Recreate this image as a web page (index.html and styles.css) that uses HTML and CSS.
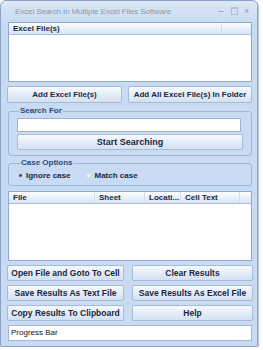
FILE: index.html
```html
<!DOCTYPE html>
<html>
<head>
<meta charset="utf-8">
<link rel="stylesheet" href="styles.css">
</head>
<body>
<div class="window">
  <div class="titlebar">
    <span class="title">Excel Search In Multiple Excel Files Software</span>
    <span class="controls">
      <span class="ctl min">&#8211;</span>
      <span class="ctl max"></span>
      <span class="ctl close">x</span>
    </span>
  </div>
  <div class="content">
    <div class="list files">
      <div class="header">
        <div class="col c-files">Excel File(s)</div>
        <div class="col c-rest"></div>
      </div>
    </div>
    <div class="row-top">
      <button class="btn">Add Excel File(s)</button>
      <button class="btn">Add All Excel File(s) In Folder</button>
    </div>
    <fieldset class="group search">
      <legend>Search For</legend>
      <input class="field" type="text">
      <button class="btn start">Start Searching</button>
    </fieldset>
    <fieldset class="group case">
      <legend>Case Options</legend>
      <div class="radios">
        <span class="radio"><span class="dot on"></span>Ignore case</span>
        <span class="radio"><span class="dot"></span>Match case</span>
      </div>
    </fieldset>
    <div class="list results">
      <div class="header">
        <div class="col c-file">File</div>
        <div class="col c-sheet">Sheet</div>
        <div class="col c-loc">Locati...</div>
        <div class="col c-text">Cell Text</div>
        <div class="col c-end"></div>
      </div>
    </div>
    <div class="grid-bottom">
      <button class="btn">Open File and Goto To Cell</button>
      <button class="btn">Clear Results</button>
      <button class="btn">Save Results As Text File</button>
      <button class="btn">Save Results As Excel File</button>
      <button class="btn">Copy Results To Clipboard</button>
      <button class="btn">Help</button>
    </div>
    <div class="progress">Progress Bar</div>
  </div>
</div>
</body>
</html>
```
FILE: styles.css
```css
html, body {
  margin: 0;
  padding: 0;
  background: #ffffff;
}
body {
  font-family: "Liberation Sans", Arial, sans-serif;
  font-size: 8px;
  color: #1b2742;
}
.window {
  width: 256px;
  height: 345px;
  border: 1px solid #8aa3c4;
  border-radius: 6px 6px 2px 2px;
  background: #c8dbf2;
  box-shadow: 1px 1px 2px rgba(90, 110, 140, 0.45);
  display: flex;
  flex-direction: column;
  overflow: hidden;
}
.titlebar {
  height: 20px;
  display: flex;
  align-items: center;
  padding: 0 8px 0 14px;
  background: linear-gradient(#dbe7f6, #cadcf2);
}
.title {
  flex: 1;
  color: #8a98ab;
  font-size: 8px;
  letter-spacing: -0.1px;
  white-space: nowrap;
}
.controls {
  display: flex;
  align-items: center;
  gap: 7px;
  color: #9aa8b9;
}
.ctl { font-size: 9px; line-height: 10px; }
.min { font-weight: bold; }
.max {
  width: 5px;
  height: 5px;
  border: 1px solid #b4c0cf;
  border-top-width: 2px;
}
.close { font-weight: bold; font-size: 8px; }
.content {
  padding: 1px 5px 0 7px;
  display: flex;
  flex-direction: column;
}
.list {
  background: #ffffff;
  border: 1px solid #8ea9cc;
  box-sizing: border-box;
}
.files { height: 60px; }
.results { height: 70px; margin-top: 5px; }
.header {
  display: flex;
  height: 12px;
  background: linear-gradient(#fdfeff, #e6eef8 60%, #d9e5f4);
  border-bottom: 1px solid #a9c0de;
  box-sizing: border-box;
}
.col {
  font-weight: bold;
  font-size: 8px;
  line-height: 11px;
  padding-left: 4px;
  border-right: 1px solid #d2deec;
  white-space: nowrap;
  overflow: hidden;
}
.c-files { width: 208px; }
.c-rest { flex: 1; border-right: none; }
.c-file { width: 81px; }
.c-sheet { width: 45px; padding-left: 4px; }
.c-loc { width: 31px; }
.c-text { width: 54px; }
.c-end { flex: 1; border-right: none; }
.btn {
  font-family: "Liberation Sans", Arial, sans-serif;
  font-size: 8px;
  font-weight: bold;
  color: #1b2742;
  height: 16px;
  padding: 0;
  margin: 0;
  border: 1px solid #a7bbd6;
  border-radius: 2px;
  background: linear-gradient(#f7fafe, #e4edf8 50%, #d3e1f2);
  white-space: nowrap;
}
.row-top {
  display: grid;
  grid-template-columns: 115px 124px;
  gap: 6px;
  margin-top: 4px;
  margin-left: -1px;
}
.row-top .btn { height: 17px; }
.group {
  margin: 3px 0 0 0;
  padding: 2px 8px 5px 8px;
  border: 1px solid #9db6d8;
  border-radius: 3px;
  min-width: 0;
}
.group legend {
  font-size: 8px;
  font-weight: bold;
  color: #2a4a7c;
  line-height: 10px;
  padding: 0 1px;
  margin-left: 2px;
}
.search { display: flex; flex-direction: column; }
.field {
  display: block;
  height: 14px;
  width: calc(100% - 2px);
  box-sizing: border-box;
  margin: 0;
  border: 1px solid #9fb3cf;
  background: #ffffff;
}
.start {
  display: block;
  width: 100%;
  margin-top: 2px;
  height: 16px;
  font-size: 9px;
}
.case {
  margin-top: 2px;
  padding: 0 8px 3px 9px;
}
.radios {
  display: flex;
  align-items: center;
  height: 14px;
  gap: 16px;
}
.radio {
  display: flex;
  align-items: center;
  font-weight: bold;
  font-size: 8px;
  color: #1b2742;
}
.dot {
  width: 5px;
  height: 5px;
  border-radius: 50%;
  border: 1px solid #d6e1ee;
  background: #eef3f9;
  margin-right: 3px;
  box-sizing: border-box;
}
.dot.on {
  background: radial-gradient(circle, #3c4a63 0 1.3px, #e8eef6 1.6px);
  border-color: #b8c6d8;
}
.grid-bottom {
  display: grid;
  grid-template-columns: 117px 121px;
  column-gap: 8px;
  row-gap: 4px;
  margin-top: 4px;
  margin-left: -1px;
}
.grid-bottom .btn { font-size: 8.5px; }
.progress {
  margin-top: 4px;
  height: 16px;
  box-sizing: border-box;
  background: #ffffff;
  border: 1px solid #a3b8d3;
  font-size: 8px;
  line-height: 14px;
  padding-left: 2px;
  color: #111;
}
```
